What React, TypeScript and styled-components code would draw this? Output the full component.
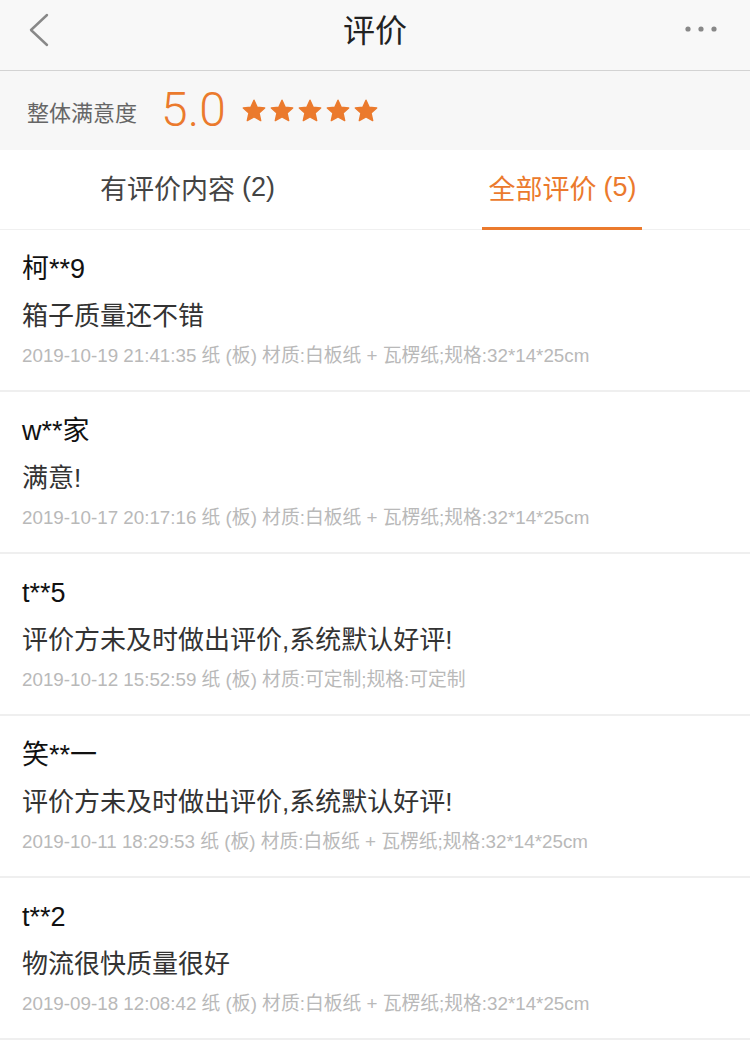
import React from "react";
import styled, { createGlobalStyle } from "styled-components";

const GlobalStyle = createGlobalStyle`
  html, body { margin: 0; padding: 0; background: #ffffff; }
  body { font-family: "Liberation Sans", "Noto Sans CJK SC", sans-serif; -webkit-font-smoothing: antialiased; }
  * { box-sizing: border-box; }
`;

const ORANGE = "#eb7a2d";

const Page = styled.div`
  width: 750px;
  min-height: 1054px;
  background: #ffffff;
  display: flex;
  flex-direction: column;
`;

const NavBar = styled.header`
  height: 71px;
  background: #f8f8f8;
  border-bottom: 1px solid #d3d3d3;
  display: grid;
  grid-template-columns: 120px 1fr 120px;
  align-items: center;
`;

const NavButton = styled.div<{ $align: "start" | "end" }>`
  display: flex;
  justify-content: ${(p) => (p.$align === "start" ? "flex-start" : "flex-end")};
  align-items: center;
  padding: ${(p) => (p.$align === "start" ? "0 0 10px 28px" : "0 32px 12px 0")};
`;

const Title = styled.h1`
  margin: 0 0 14px;
  text-align: center;
  font-family: "Noto Sans CJK SC", sans-serif;
  font-weight: 400;
  font-size: 32px;
  color: #222;
`;

const Summary = styled.section`
  height: 79px;
  background: #f7f7f7;
  display: flex;
  align-items: center;
  padding: 0 0 0 27px;
`;

const SummaryLabel = styled.span`
  font-family: "Noto Sans CJK SC", sans-serif;
  font-size: 22px;
  color: #666;
  margin-right: 24px;
`;

const Score = styled.span`
  font-family: Roboto, "Liberation Sans", sans-serif;
  font-weight: 300;
  font-size: 48px;
  color: ${ORANGE};
  margin-right: 16px;
  line-height: 1;
  padding-bottom: 2px;
`;

const Stars = styled.div`
  display: flex;
  gap: 4px;
  align-items: center;
`;

const Tabs = styled.nav`
  height: 80px;
  background: #fff;
  display: grid;
  grid-template-columns: 1fr 1fr;
  border-bottom: 1px solid #f0f0f0;
`;

const Tab = styled.div<{ $active?: boolean }>`
  position: relative;
  display: flex;
  align-items: center;
  justify-content: center;
  font-family: "Noto Sans CJK SC", sans-serif;
  font-size: 27px;
  color: ${(p) => (p.$active ? ORANGE : "#444")};
  padding-bottom: 4px;
  &::after {
    content: "";
    display: ${(p) => (p.$active ? "block" : "none")};
    position: absolute;
    bottom: -1px;
    left: 50%;
    width: 160px;
    height: 3px;
    margin-left: -81px;
    background: ${ORANGE};
  }
`;

const Count = styled.span`
  font-family: "Liberation Sans", sans-serif;
  margin-left: 7px;
`;

const List = styled.ul`
  list-style: none;
  margin: 0;
  padding: 0;
`;

const Item = styled.li`
  padding: 22px 22px 21px;
  border-bottom: 2px solid #efefef;
  display: flex;
  flex-direction: column;
`;

const Name = styled.div`
  font-family: "Liberation Sans", "Noto Sans CJK SC", sans-serif;
  font-size: 27px;
  line-height: 34px;
  height: 34px;
  color: #111;
`;

const Content = styled.div`
  margin-top: 13px;
  font-family: "Liberation Sans", "Noto Sans CJK SC", sans-serif;
  font-size: 26px;
  line-height: 34px;
  height: 34px;
  color: #333;
`;

const Meta = styled.div`
  margin-top: 10px;
  font-family: "Liberation Sans", "Noto Sans CJK SC", sans-serif;
  font-size: 18.8px;
  line-height: 26px;
  height: 26px;
  color: #b9b9b9;
  white-space: nowrap;
`;

const Star = () => (
  <svg width="24" height="24" viewBox="0 0 24 24">
    <path
      d="M12 1.2l3.2 7 7.5.8-5.6 5.1 1.6 7.5L12 17.8l-6.7 3.8 1.6-7.5L1.3 9l7.5-.8z"
      fill={ORANGE}
      stroke={ORANGE}
      strokeWidth="1.4"
      strokeLinejoin="round"
    />
  </svg>
);

const reviews = [
  {
    name: "柯**9",
    content: "箱子质量还不错",
    meta: "2019-10-19 21:41:35 纸 (板) 材质:白板纸 + 瓦楞纸;规格:32*14*25cm",
  },
  {
    name: "w**家",
    content: "满意!",
    meta: "2019-10-17 20:17:16 纸 (板) 材质:白板纸 + 瓦楞纸;规格:32*14*25cm",
  },
  {
    name: "t**5",
    content: "评价方未及时做出评价,系统默认好评!",
    meta: "2019-10-12 15:52:59 纸 (板) 材质:可定制;规格:可定制",
  },
  {
    name: "笑**一",
    content: "评价方未及时做出评价,系统默认好评!",
    meta: "2019-10-11 18:29:53 纸 (板) 材质:白板纸 + 瓦楞纸;规格:32*14*25cm",
  },
  {
    name: "t**2",
    content: "物流很快质量很好",
    meta: "2019-09-18 12:08:42 纸 (板) 材质:白板纸 + 瓦楞纸;规格:32*14*25cm",
  },
];

export default function App() {
  return (
    <Page>
      <GlobalStyle />
      <NavBar>
        <NavButton $align="start">
          <svg width="22" height="34" viewBox="0 0 22 34">
            <path d="M19 2 L3 17 L19 32" fill="none" stroke="#888" strokeWidth="2.4" strokeLinecap="round" strokeLinejoin="round" />
          </svg>
        </NavButton>
        <Title>评价</Title>
        <NavButton $align="end">
          <svg width="34" height="8" viewBox="0 0 34 8">
            <circle cx="4" cy="4" r="2.6" fill="#888" />
            <circle cx="17" cy="4" r="2.6" fill="#888" />
            <circle cx="30" cy="4" r="2.6" fill="#888" />
          </svg>
        </NavButton>
      </NavBar>
      <Summary>
        <SummaryLabel>整体满意度</SummaryLabel>
        <Score>5.0</Score>
        <Stars>
          {[0, 1, 2, 3, 4].map((i) => (
            <Star key={i} />
          ))}
        </Stars>
      </Summary>
      <Tabs>
        <Tab>
          有评价内容<Count>(2)</Count>
        </Tab>
        <Tab $active>
          全部评价<Count>(5)</Count>
        </Tab>
      </Tabs>
      <List>
        {reviews.map((r, i) => (
          <Item key={i}>
            <Name>{r.name}</Name>
            <Content>{r.content}</Content>
            <Meta>{r.meta}</Meta>
          </Item>
        ))}
      </List>
    </Page>
  );
}
